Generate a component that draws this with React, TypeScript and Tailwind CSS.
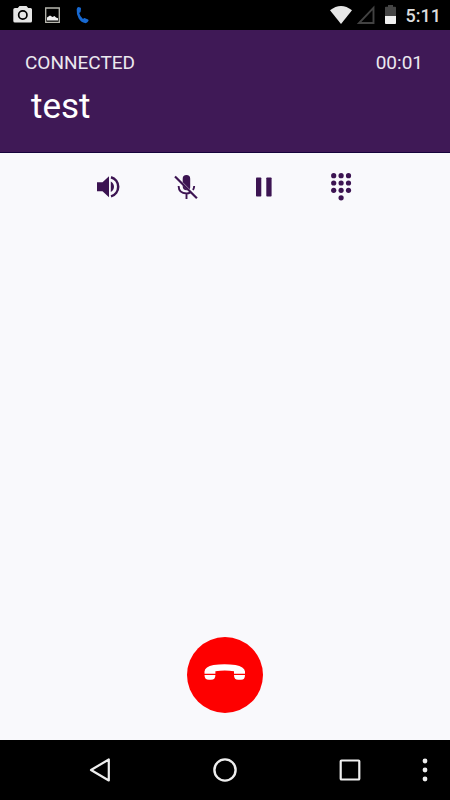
import React from "react";

const status = "shrink-0";

function StatusBar() {
  return (
    <div className="flex h-[30px] shrink-0 items-center justify-between bg-black pr-[9px] pl-[12px]">
      <div className="flex items-center gap-[10px]">
        <svg className={status} width="22" height="30" viewBox="0 0 22 30" aria-label="Camera">
          <path fill="#e6e6e6" fillRule="evenodd" d="M7.5 6h7l1.7 2H18.500q1.500 0 1.500 1.500V21q0 1.500-1.500 1.500H3Q1.300 22.500 1.300 21V9.500Q1.300 8 3 8h2.800zM10.800 10a5 5 0 1 0 0 10 5 5 0 0 0 0-10zm0 1.700a3.300 3.300 0 1 1 0 6.600 3.300 3.300 0 0 1 0-6.600z" />
        </svg>
        <svg className={status} width="18" height="30" viewBox="0 0 18 30" aria-label="Picture">
          <path fill="none" stroke="#b8b8b0" strokeWidth="1.300" d="M1.700 8h13.600v14.300H1.700z" />
          <path fill="#f0f0f0" d="M3 20.500v-3l3-2 2.500 1.500 2-1 1.500 1.500 2 .8v2.200z" />
        </svg>
        <svg className="ml-[2px] shrink-0" width="18" height="30" viewBox="0 0 18 30" aria-label="Call in progress">
          <path fill="#1769d2" d="M4.300 7 6.300 7.600q.7.300.7 1.200L6.700 11.600q-.2.800-.9 1l-.6.400q.8 3.500 3.800 5.900l.8-.6q.6-.4 1.300 0l3 1.300q.8.600.3 1.500-1.200 2.300-3.500 2-3.500-.4-6.300-4.800Q2.300 14.200 2.700 9.300q.3-2 1.600-2.300z" />
        </svg>
      </div>
      <div className="flex items-center">
        <svg className={status} width="24" height="30" viewBox="0 0 24 30" aria-label="Wi-Fi">
          <path fill="#e6e6e6" d="M0 10.300Q11 1.700 22 10.300L11 24z" />
        </svg>
        <svg className="ml-[2px] shrink-0" width="20" height="30" viewBox="0 0 20 30" aria-label="No signal">
          <path fill="none" stroke="#424242" strokeWidth="1.900" d="M17.500 7.800v15.200H3z" />
        </svg>
        <svg className="ml-[8px] shrink-0" width="14" height="30" viewBox="0 0 14 30" aria-label="Battery">
          <path fill="#454545" d="M1 7.500q0-.8.800-.8H4V5h5v1.700h2.200q.8 0 .8.800V16H1z" />
          <path fill="#f0f0f0" d="M1 16h11v7q0 .9-.8.900H1.800Q1 23.900 1 23z" />
        </svg>
        <span className="ml-[8px] pt-px text-[18px] leading-[29px] font-medium text-[#dddddd]">5:11</span>
      </div>
    </div>
  );
}

function CallHeader() {
  return (
    <header className="h-[123px] shrink-0 border-b border-[#16043c] bg-[#3f1956] px-[25px] pt-[21px]">
      <div className="flex justify-between pr-[2px] text-[19px] leading-[24px] text-[#ece8ef]">
        <span>CONNECTED</span>
        <time>00:01</time>
      </div>
      <h1 className="mt-[12px] pl-[6px] text-[35px] leading-[40px] text-white">test</h1>
    </header>
  );
}

const control = "flex h-[32px] w-[32px] items-center justify-center";

function Controls() {
  return (
    <div className="flex justify-center gap-[46px] pt-[18px] text-[#3c1452]">
      <button className={control} aria-label="Speaker">
        <svg width="32" height="32" viewBox="0 0 32 32" fill="currentColor">
          <path d="M5 11.300h5.500l6.500-6v20.900l-6.500-6H5zM18.800 10.500q3.200 2 3.200 5.300t-3.200 5.300z" />
          <path fill="none" stroke="currentColor" strokeWidth="2.500" d="M19 6.200a10 10 0 0 1 0 19.200" />
        </svg>
      </button>
      <button className={control} aria-label="Mute">
        <svg width="32" height="32" viewBox="0 0 32 32" fill="none" stroke="currentColor">
          <path fill="currentColor" stroke="none" d="M12.700 7.700a3.700 3.700 0 0 1 7.500 0v8.300q0 1.500-.5 2.300l-7-7zM12.700 14.200l5 5q-5 .5-5-4z" />
          <path strokeWidth="1.900" d="M8.600 15q.2 7.300 7.900 7.500 2 0 3.900-1.100M24.200 15q-.1 2.300-1.200 4.100M16.500 22.500v5.500" />
          <path strokeWidth="2.200" d="M5 5.500 26.900 27.200" />
        </svg>
      </button>
      <button className={control} aria-label="Hold">
        <svg width="32" height="32" viewBox="0 0 32 32" fill="currentColor">
          <rect x="8" y="6.500" width="5.300" height="19" rx=".8" />
          <rect x="18.300" y="6.500" width="5.300" height="19" rx=".8" />
        </svg>
      </button>
      <button className={control} aria-label="Keypad">
        <svg width="32" height="32" viewBox="0 0 32 32" fill="currentColor">
          {[4.700, 12, 19.300].map((y) =>
            [7.700, 15.100, 22.500].map((x) => <circle key={`${x}-${y}`} cx={x} cy={y} r="2.600" />)
          )}
          <circle cx="15.100" cy="26.800" r="2.600" />
        </svg>
      </button>
    </div>
  );
}

function NavBar() {
  return (
    <nav className="grid h-[60px] shrink-0 grid-cols-[3fr_10fr_10fr_10fr_3fr] items-center bg-black text-[#eeeeee]">
      <button className="col-start-2 justify-self-center" aria-label="Back">
        <svg width="26" height="26" viewBox="0 0 26 26" fill="none" stroke="currentColor" strokeWidth="2.200" strokeLinejoin="round">
          <path d="M21.800 2.500v21L4 13z" />
        </svg>
      </button>
      <button className="justify-self-center" aria-label="Home">
        <svg width="26" height="26" viewBox="0 0 26 26" fill="none" stroke="currentColor" strokeWidth="2.400">
          <circle cx="13" cy="13" r="10.600" />
        </svg>
      </button>
      <button className="justify-self-center" aria-label="Recent apps">
        <svg width="26" height="26" viewBox="0 0 26 26" fill="none" stroke="currentColor" strokeWidth="2.200">
          <rect x="3.700" y="3.500" width="18.600" height="19" rx=".8" />
        </svg>
      </button>
      <button aria-label="More options">
        <svg width="24" height="26" viewBox="0 0 24 26" fill="currentColor">
          <circle cx="12" cy="4" r="2.400" />
          <circle cx="12" cy="13" r="2.400" />
          <circle cx="12" cy="22" r="2.400" />
        </svg>
      </button>
    </nav>
  );
}

export default function App() {
  return (
    <div className="flex min-h-screen flex-col bg-[#f9f9fc] font-['Roboto',sans-serif]">
      <StatusBar />
      <CallHeader />
      <main className="flex grow flex-col justify-between pb-[27px]">
        <Controls />
        <button
          className="flex h-[76px] w-[76px] items-center justify-center self-center rounded-full bg-[#fe0000]"
          aria-label="End call"
        >
          <svg width="44" height="44" viewBox="0 0 44 44">
            <path
              fill="#fff"
              d="M1.500 20.800V18.500q.5-5 9-6.500 11-1.400 22 0 8.800 1.500 9.500 6.500v2.300H31V18.300q-9-1.700-18.600 0v2.500zM1.500 21.900h10.900q0 4.900-4.500 4.900H6q-4.500 0-4.500-4.900zM31 21.900h11q0 4.900-4 4.900h-2.800q-4.200 0-4.200-4.900z"
            />
          </svg>
        </button>
      </main>
      <NavBar />
    </div>
  );
}
